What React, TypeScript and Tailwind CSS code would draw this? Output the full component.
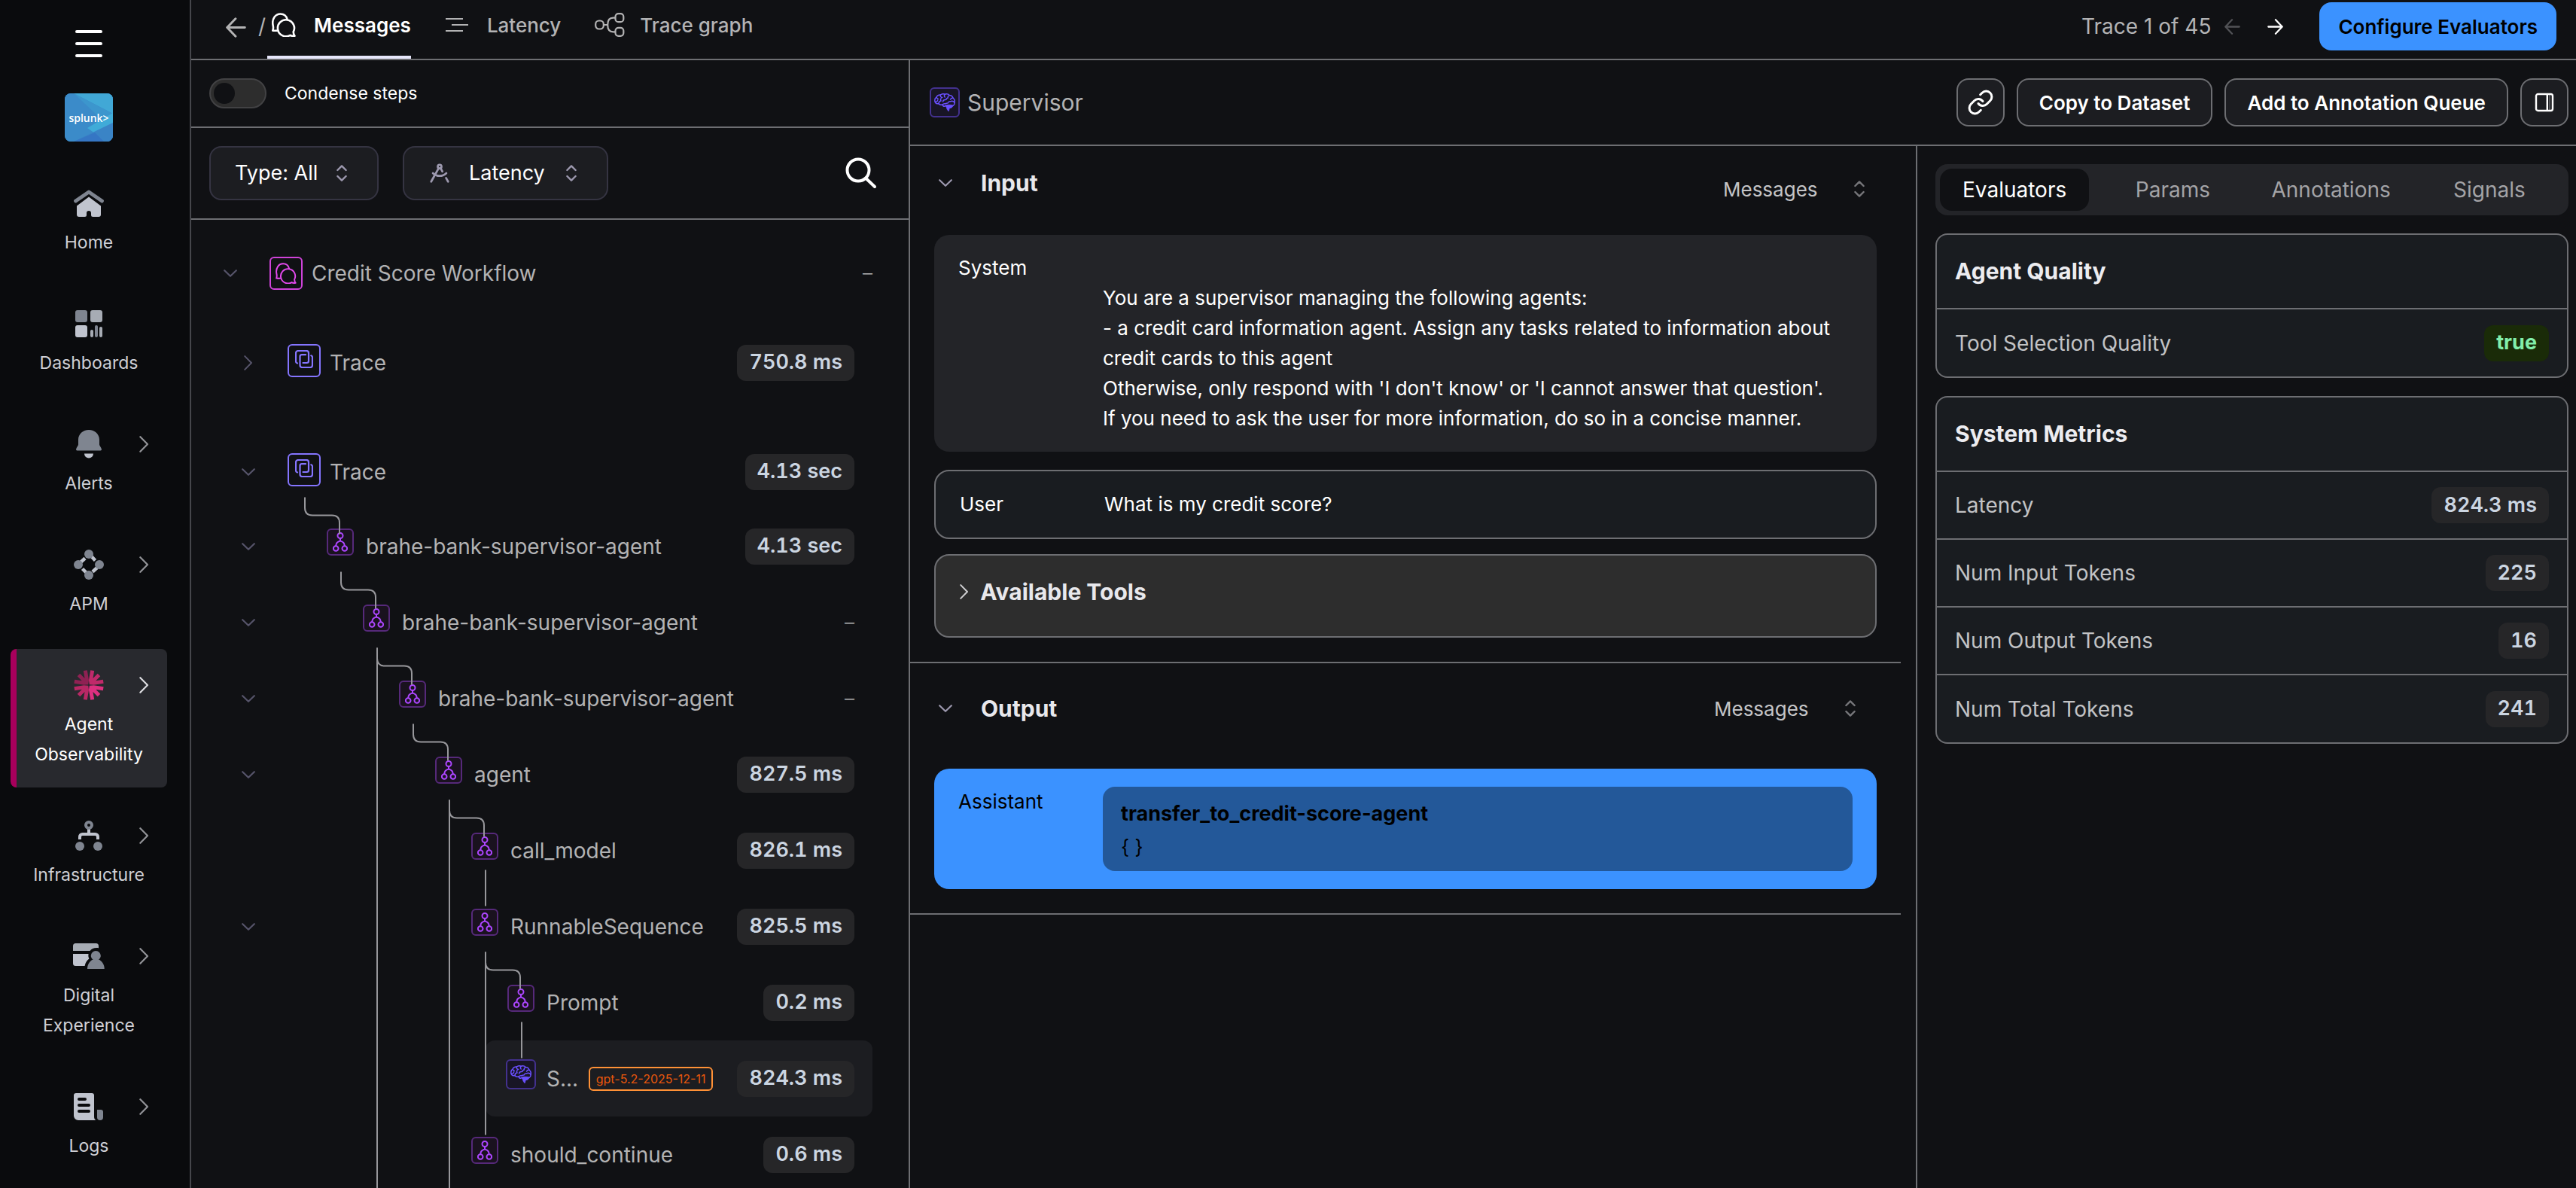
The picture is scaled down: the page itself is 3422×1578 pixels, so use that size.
import { useState } from 'react';
import type { ReactNode } from 'react';
import clsx from 'clsx';
import { DraftingCompass, Link } from 'lucide-react';

type SpanKind = 'trace' | 'agent' | 'llm';

interface SpanRow {
  name: string;
  level: number;
  kind: SpanKind;
  duration?: string;
  model?: string;
  expandable?: boolean;
}

const SPANS: SpanRow[] = [
  { name: 'brahe-bank-supervisor-agent', level: 1, kind: 'agent', duration: '4.13 sec', expandable: true },
  { name: 'brahe-bank-supervisor-agent', level: 2, kind: 'agent', expandable: true },
  { name: 'brahe-bank-supervisor-agent', level: 3, kind: 'agent', expandable: true },
  { name: 'agent', level: 4, kind: 'agent', duration: '827.5 ms', expandable: true },
  { name: 'call_model', level: 5, kind: 'agent', duration: '826.1 ms' },
  { name: 'RunnableSequence', level: 5, kind: 'agent', duration: '825.5 ms', expandable: true },
  { name: 'Prompt', level: 6, kind: 'agent', duration: '0.2 ms' },
  { name: 'S...', level: 6, kind: 'llm', duration: '824.3 ms', model: 'gpt-5.2-2025-12-11' },
  { name: 'should_continue', level: 5, kind: 'agent', duration: '0.6 ms' },
];

const SELECTED_SPAN = 7;
const ROW_HEIGHT = 101;
const TRACE_HEIGHT = 97;
const INDENT = 48;

const SYSTEM_PROMPT = `
You are a supervisor managing the following agents:
- a credit card information agent. Assign any tasks related to information about credit cards to this agent
Otherwise, only respond with 'I don't know' or 'I cannot answer that question'.
If you need to ask the user for more information, do so in a concise manner.`;

const METRICS = [
  { label: 'Latency', value: '824.3 ms' },
  { label: 'Num Input Tokens', value: '225' },
  { label: 'Num Output Tokens', value: '16' },
  { label: 'Num Total Tokens', value: '241' },
];

/* ---------- icons ---------- */

function ChevronDown({ className }: { className?: string }) {
  return (
    <svg className={className} width="18" height="10" viewBox="0 0 18 10" fill="none" stroke="currentColor" strokeWidth="2.2" strokeLinecap="round" strokeLinejoin="round">
      <path d="M1.2 1.2 9 8.8l7.8-7.6" />
    </svg>
  );
}

function ChevronRight({ className, size = 22 }: { className?: string; size?: number }) {
  return (
    <svg className={className} width={size * 0.56} height={size} viewBox="0 0 12 22" fill="none" stroke="currentColor" strokeWidth="2.2" strokeLinecap="round" strokeLinejoin="round">
      <path d="m1.2 1.2 9.6 9.8-9.6 9.8" />
    </svg>
  );
}

function SortIcon({ className }: { className?: string }) {
  return (
    <svg className={className} width="14" height="22" viewBox="0 0 14 22" fill="none" stroke="currentColor" strokeWidth="2.4" strokeLinecap="round" strokeLinejoin="round">
      <path d="m1.4 7 5.6-5.6L12.6 7M1.4 15 7 20.6l5.6-5.6" />
    </svg>
  );
}

function ArrowIcon({ className, flip, size = 24 }: { className?: string; flip?: boolean; size?: number }) {
  return (
    <svg className={className} width={size} height={size} viewBox="0 0 24 24" fill="none" stroke="currentColor" strokeWidth="2.6" strokeLinecap="round" strokeLinejoin="round">
      {flip ? <path d="M1.5 12h21M12.5 1.5 22.5 12l-10 10.500" /> : <path d="M22.5 12h-21M11.5 1.5 1.5 12l10 10.500" />}
    </svg>
  );
}

function ChatIcon({ size = 32, strokeWidth = 2.2 }: { size?: number; strokeWidth?: number }) {
  return (
    <svg width={size} height={size} viewBox="0 0 32 32" fill="none" stroke="currentColor" strokeWidth={strokeWidth} strokeLinecap="round" strokeLinejoin="round">
      <path d="M8 23.6C6 23.9 4 23.7 1.3 23.6c1-2.4.9-4.4.3-7.1C-.1 8 5 1.5 11.5 1.5c4.3 0 7.9 2.7 9.1 7" />
      <path d="M30.5 30.7c-2.6.3-4.4.1-6-.9A11 11 0 1 1 28.7 25.4c.1 1.9.7 3.9 1.8 5.3Z" />
    </svg>
  );
}

function TraceIcon() {
  return (
    <svg width="24" height="24" viewBox="0 0 24 24" fill="none" stroke="currentColor" strokeWidth="2.2" strokeLinecap="round">
      <path d="M3 17.5c-1.300-.4-2-1.400-2-2.500V4a3 3 0 0 1 3-3h11a3 3 0 0 1 3 3v10.500a2.500 2.500 0 0 1-2.500 2.500H10.500" />
      <path d="M14 6.2H9A2.5 2.5 0 0 0 6.5 8.7V20a3 3 0 0 0 3 3H20a3 3 0 0 0 3-3V9.500c0-1-.7-1.800-1.700-2.200" />
    </svg>
  );
}

function AgentIcon() {
  return (
    <svg width="20" height="26" viewBox="0 0 20 26" fill="none" stroke="currentColor" strokeWidth="2">
      <circle cx="10" cy="4.5" r="3.5" />
      <circle cx="4.2" cy="21.5" r="3.3" />
      <circle cx="15.8" cy="21.5" r="3.3" />
      <path d="M10 8v4M10 11.5c-3.800 1-5.800 3-5.800 6.700M10 11.5c3.800 1 5.800 3 5.800 6.700" />
    </svg>
  );
}

function BrainIcon() {
  return (
    <svg width="28" height="24" viewBox="0 0 28 24" fill="none" stroke="currentColor" strokeWidth="1.5" strokeLinecap="round" strokeLinejoin="round">
      <path d="M14 17.3c-1.700.1-2.600-1-2.900-2.300-1.800.6-3.900.2-5-1.200-2 .2-4.200-.4-4.900-2.300C.3 8.6 1.3 6.2 3.1 5.2 3.8 2.9 6.1 1.9 8.4 2 9.9.8 12.4.5 14.2 1.2c2.300-.7 4.700-.1 6 1.300 2.300.1 4.200 1.500 4.700 3.600 2 1.400 2.700 3.800 2.100 6 .2 1.800-.2 3.300-1.600 4" />
      <path d="M3.1 5.2c.3 1.300 1 2 2.200 2.200M1.3 11.1c1.700.4 3-.4 3.300-2M6.1 13.7c-.2-1.900.9-3.300 2.700-3.600M8.4 2.1c-.4 2 .6 3.300 2.300 3.500M9 9.9c-.7-1-.6-2.200.2-3.100M14.2 1.3c-1 1.300-1 2.700 0 3.700M14.6 8.6c-1.700 0-2.800.9-3 2.300M11.1 15c.7-1.100 2-1.500 3.600-1.300M20.2 2.6c-1.500.6-2.200 1.800-1.900 3.300M18.3 5.9c-1.500.3-2.500 1.300-2.500 2.700M24.9 6.1c-1.700-.1-2.800.6-3.300 2M27 12.1c-1.500-1.800-3.600-2.200-5.400-1.300M21.6 10.8c-1.600-.2-2.900.5-3.200 1.900M18.4 12.7c-1.300.2-2.500.5-3.700 1" />
      <path d="M14.5 16.2c2.700-1.200 7.200-1.300 10.700-.2-.5 2.300-2.500 3.700-5 3.700-.3 1.700-.6 2.900-1 4-1.700-1.300-2.500-3.300-2.900-5.300-.8-.5-1.400-1.300-1.800-2.200Z" fill="currentColor" strokeWidth="0.8" />
    </svg>
  );
}

function GraphIcon() {
  return (
    <svg width="40" height="32" viewBox="0 0 40 32" fill="none" stroke="currentColor" strokeWidth="2.2">
      <rect x="1.2" y="10.5" width="10.6" height="11" rx="4.5" />
      <rect x="27.5" y="1.2" width="10.8" height="11" rx="4" />
      <rect x="27.5" y="19.8" width="10.8" height="11" rx="4" />
      <path d="M11.8 16h5M27.5 6.7h-3c-5 0-7.300 3-7.300 9.300s2.300 9.300 7.300 9.300h3" />
    </svg>
  );
}

function BarsIcon() {
  return (
    <svg width="32" height="20" viewBox="0 0 32 20" fill="none" stroke="currentColor" strokeWidth="2.2">
      <path d="M1 2h23M9 10h22M1 18h23" />
    </svg>
  );
}

function SearchIcon() {
  return (
    <svg width="42" height="42" viewBox="0 0 42 42" fill="none" stroke="currentColor" strokeWidth="4" strokeLinecap="round">
      <circle cx="17" cy="17" r="14.5" />
      <path d="m27.5 28 11.500 11" />
    </svg>
  );
}

function PanelIcon() {
  return (
    <svg width="26" height="26" viewBox="0 0 26 26" fill="none" stroke="currentColor" strokeWidth="2.4">
      <rect x="2" y="2" width="22" height="22" rx="2.5" />
      <path d="M16.8 2v22" />
      <path d="M20 3v20" strokeWidth="1" opacity="0.5" />
    </svg>
  );
}

function HomeNavIcon() {
  return (
    <svg width="42" height="36" viewBox="0 0 42 36">
      <path d="M3.5 15 21 3l17.500 12" fill="none" stroke="#7f8590" strokeWidth="4.8" strokeLinecap="round" strokeLinejoin="round" />
      <path d="M21 9.5 37 21.5V33a3 3 0 0 1-3 3h-7.500a2.500 2.500 0 0 1-2.500-2.500V31a3 3 0 0 0-6 0v2.500a2.500 2.500 0 0 1-2.500 2.500H8a3 3 0 0 1-3-3V21.500Z" fill="#c0c4ce" />
    </svg>
  );
}

function DashboardsNavIcon() {
  return (
    <svg width="36" height="36" viewBox="0 0 36 36">
      <rect width="16" height="16" rx="3" fill="#7f8590" />
      <rect x="20" width="16" height="16" rx="3" fill="#a7acb4" />
      <rect y="20" width="16" height="16" rx="3" fill="#c0c4ce" />
      <rect x="20" y="26" width="4" height="10" rx="2" fill="#a7acb4" />
      <rect x="26" y="20" width="4" height="16" rx="2" fill="#7f8590" />
      <rect x="32" y="22" width="4" height="14" rx="2" fill="#a7acb4" />
    </svg>
  );
}

function AlertsNavIcon() {
  return (
    <svg width="34" height="38" viewBox="0 0 34 38">
      <path d="M17 0c8 0 14 5.8 14 13v6.500c0 1.700 2.500 3.500 3 6.500 0 .9-.6 1.400-1.500 1.400h-31C.6 27.4 0 26.9 0 26c.5-3 3-4.800 3-6.500V13C3 5.8 9 0 17 0Z" fill="#7f8590" />
      <path d="M11 31.5h12a6 6 0 0 1-12 0Z" fill="#c0c4ce" />
    </svg>
  );
}

function ApmNavIcon() {
  return (
    <svg width="40" height="40" viewBox="0 0 40 40">
      <g stroke="#c0c4ce" strokeWidth="4.5">
        <path d="m23.5 9 5 5.500M9.5 16.5l5.500-5M11.5 25.5l5 5M25 29.5l6-5.500" />
      </g>
      <g fill="#7f8590">
        <circle cx="20" cy="6" r="6" />
        <circle cx="6" cy="20" r="6" />
        <circle cx="34" cy="20" r="6" />
        <circle cx="20" cy="34" r="6" />
      </g>
    </svg>
  );
}

function AgentNavIcon() {
  return (
    <svg width="40" height="40" viewBox="0 0 40 40" fill="none" strokeWidth="5">
      <path d="M15.3.6 17.5 13.5 17 17l-3.500.3L.8 15.2M6.5 6.5 16.5 16.5" stroke="#8f2153" />
      <path d="M24.7.6 22.5 13.5 23 17l3.500.3 12.700-2.100M33.5 6.5 23.5 16.5" stroke="#c02a6a" />
      <path d="M15.3 39.4 17.5 26.5 17 23l-3.500-.3L.8 24.8M6.5 33.5l10-10" stroke="#b82865" />
      <path d="M24.7 39.4 22.5 26.5 23 23l3.500-.3 12.700 2.100M33.5 33.5l-10-10" stroke="#dd3080" />
    </svg>
  );
}

function InfraNavIcon() {
  return (
    <svg width="36" height="40" viewBox="0 0 36 40">
      <path d="M18 10v8M6 25v-3.500a3.500 3.500 0 0 1 3.500-3.500h17a3.500 3.500 0 0 1 3.500 3.500V25" fill="none" stroke="#c0c4ce" strokeWidth="4" />
      <circle cx="18" cy="6" r="4" fill="none" stroke="#7f8590" strokeWidth="4" />
      <circle cx="6" cy="34" r="6" fill="#7f8590" />
      <circle cx="30" cy="34" r="6" fill="#7f8590" />
    </svg>
  );
}

function DigitalNavIcon() {
  return (
    <svg width="42" height="34" viewBox="0 0 42 34">
      <path d="M0 10V3.5A3.5 3.5 0 0 1 3.5 0h27A3.5 3.5 0 0 1 34 3.5V6.300c-4.500-1-9 .3-11.500 3.700Z" fill="#a7acb4" />
      <path d="M0 14h20.600c-.5 2.500-.2 4.500.8 6.500-3 2-5 5.500-5.800 9.500H3.500A3.5 3.5 0 0 1 0 26.5Z" fill="#c0c4ce" />
      <circle cx="30.3" cy="16.5" r="6.5" fill="#7f8590" />
      <path d="M19 34c0-6 3.200-10.500 7.500-12.500h7.600c4.300 2 7.600 6.500 7.600 12.500Z" fill="#7f8590" />
    </svg>
  );
}

function LogsNavIcon() {
  return (
    <svg width="40" height="36" viewBox="0 0 40 36">
      <path d="M3 0h21a3 3 0 0 1 3 3v28c0 2.500.8 4.200 2.500 5H6a6 6 0 0 1-6-6V3a3 3 0 0 1 3-3Z" fill="#c0c4ce" />
      <path d="M7 8h8M7 16h13M7 24h13" stroke="#0a0b0d" strokeWidth="4" strokeLinecap="round" />
      <path d="M31 22h5a3 3 0 0 1 3 3v7a4 4 0 0 1-8 0Z" fill="#7f8590" />
    </svg>
  );
}

/* ---------- sidebar ---------- */

interface NavItem {
  lines: string[];
  icon: ReactNode;
  submenu?: boolean;
  active?: boolean;
}

const NAV: NavItem[] = [
  { lines: ['Home'], icon: <HomeNavIcon /> },
  { lines: ['Dashboards'], icon: <DashboardsNavIcon /> },
  { lines: ['Alerts'], icon: <AlertsNavIcon />, submenu: true },
  { lines: ['APM'], icon: <ApmNavIcon />, submenu: true },
  { lines: ['Agent', 'Observability'], icon: <AgentNavIcon />, submenu: true, active: true },
  { lines: ['Infrastructure'], icon: <InfraNavIcon />, submenu: true },
  { lines: ['Digital', 'Experience'], icon: <DigitalNavIcon />, submenu: true },
  { lines: ['Logs'], icon: <LogsNavIcon />, submenu: true },
];

function Sidebar() {
  return (
    <aside className="flex w-[254px] shrink-0 flex-col items-center border-r-2 border-[#45464b] bg-[#0a0b0d] pr-4">
      <button aria-label="Toggle navigation" className="mt-10 flex flex-col gap-3">
        <span className="h-1 w-9 rounded-full bg-white" />
        <span className="h-1 w-9 rounded-full bg-white" />
        <span className="h-1 w-9 rounded-full bg-white" />
      </button>

      <a href="#" className="relative mt-12 flex size-16 items-center justify-center overflow-hidden rounded-lg bg-[#3a8cc8]">
        <svg className="absolute inset-0" width="64" height="64" viewBox="0 0 64 64">
          <path d="M0 0h64v64H0Z" fill="#3b8bc9" />
          <path d="M12 0h52v27Z" fill="#41a8d6" />
          <path d="M12 0 64 27v12L44 30Z" fill="#3c96cd" />
          <path d="M64 26v14L40 53 30 46Z" fill="#42b3dc" opacity="0.8" />
          <path d="M64 39v25H12Z" fill="#3a84c6" />
          <path d="M40 52 12 64h40Z" fill="#3576c4" />
        </svg>
        <span className="relative font-['Open_Sans',sans-serif] text-[14px] font-semibold text-white">splunk&gt;</span>
      </a>

      <nav className="mt-[34px] flex w-[208px] flex-col gap-4">
        {NAV.map((item) => (
          <a
            key={item.lines.join(' ')}
            href="#"
            className={clsx(
              'grid grid-cols-[1fr_42px_1fr] justify-items-center rounded-lg pt-7 pb-6 text-[23px] leading-10',
              item.active
                ? 'bg-[linear-gradient(90deg,#a8005c_8px,#28292e_8px)] text-white'
                : 'text-[#cfd0d6]',
            )}
          >
            <span className="col-start-2 flex h-10 items-center">{item.icon}</span>
            {item.submenu && (
              <span className={clsx('flex h-10 items-center pl-[22px]', item.active ? 'text-[#dcdce0]' : 'text-[#929397]')}>
                <ChevronRight />
              </span>
            )}
            <span className="col-span-3 mt-3 text-center">
              {item.lines.map((line) => (
                <span key={line} className="block">{line}</span>
              ))}
            </span>
          </a>
        ))}
      </nav>
    </aside>
  );
}

/* ---------- trace tree ---------- */

function Pill({ children, tone = 'neutral' }: { children: ReactNode; tone?: 'neutral' | 'success' }) {
  return (
    <span
      className={clsx(
        'inline-flex h-12 shrink-0 items-center rounded-xl px-4 text-[27px] whitespace-nowrap tabular-nums',
        tone === 'success' ? 'bg-[#1a2b08] font-bold text-[#82efac]' : 'bg-[#262628] font-semibold text-[#cbd5e1]',
      )}
    >
      {children}
    </span>
  );
}

function SpanBadge({ kind }: { kind: SpanKind }) {
  if (kind === 'trace') {
    return (
      <span className="flex size-11 items-center justify-center rounded-md border-2 border-[#8575ff] pb-1 text-[#8575ff]">
        <TraceIcon />
      </span>
    );
  }
  if (kind === 'llm') {
    return (
      <span className="flex size-10 items-center justify-center rounded-md border-2 border-[#43318e] bg-[#181526] text-[#6a50ff]">
        <BrainIcon />
      </span>
    );
  }
  return (
    <span className="flex size-9 items-center justify-center rounded-md border-2 border-[#56297a] bg-[#1a121f] text-[#ad46ff]">
      <AgentIcon />
    </span>
  );
}

function TreeRow({ span, selected, open = true }: { span: SpanRow; selected?: boolean; open?: boolean }) {
  const isTrace = span.kind === 'trace';
  return (
    <div className={clsx('flex items-center', isTrace ? 'h-[97px]' : 'h-[101px]')}>
      <span className="ml-[62px] flex w-7 shrink-0 justify-center">
        {span.expandable && (
          <button aria-label={open ? 'Collapse' : 'Expand'} className="text-[#56546a]">
            {open ? <ChevronDown /> : <ChevronRight size={20} />}
          </button>
        )}
      </span>
      <div
        className={clsx('flex h-full min-w-0 flex-1 items-center rounded-xl pr-6 pl-[25px]', selected && 'bg-[#1c1d21]')}
        style={{ marginLeft: 13 + span.level * INDENT }}
      >
        <span className={clsx('mr-3 flex w-11 shrink-0 justify-center', isTrace ? 'mb-[6px]' : 'mb-3')}>
          <SpanBadge kind={span.kind} />
        </span>
        <span className="min-w-0 flex-1 truncate text-[28px] text-[#b3b3b4]">{span.name}</span>
        {span.model && (
          <span className="mr-8 ml-2 flex h-8 shrink-0 items-center rounded-md border-2 border-[#ff9136] px-2 text-[16px] text-[#e8570c]">
            {span.model}
          </span>
        )}
        {span.duration ? <Pill>{span.duration}</Pill> : <span className="text-[26px] font-light text-[#b3b3b4]">–</span>}
      </div>
    </div>
  );
}

// Lines that join the icons of the expanded trace
function Connectors() {
  const x = (level: number) => 151 + level * INDENT;
  const y = (index: number) => (index < 0 ? TRACE_HEIGHT / 2 : TRACE_HEIGHT + ROW_HEIGHT * (index + 0.5));
  const bottom = TRACE_HEIGHT + ROW_HEIGHT * SPANS.length;

  const elbow = (level: number, index: number) =>
    `M${x(level)} ${y(index) + 34}v14q0 10 10 10h26q10 0 10 10v15`;
  const sibling = (level: number, index: number) => `M${x(level)} ${y(index) + 26}v48`;

  return (
    <svg className="pointer-events-none absolute inset-0" width="100%" height="100%" fill="none" stroke="#97979b" strokeWidth="2">
      <path d={elbow(0, -1)} />
      <path d={elbow(1, 0)} />
      <path d={elbow(2, 1)} />
      <path d={elbow(3, 2)} />
      <path d={elbow(4, 3)} />
      <path d={elbow(5, 5)} />
      <path d={sibling(5, 4)} />
      <path d={sibling(6, 6)} />
      <path d={`M${x(2)} ${y(1) + 34}V${bottom}`} />
      <path d={`M${x(4)} ${y(3) + 34}V${bottom}`} />
      <path d={`M${x(5)} ${y(5) + 34}V${y(8) - 26}`} />
    </svg>
  );
}

function TracePanel() {
  const [condense, setCondense] = useState(false);

  return (
    <section className="flex min-w-0 flex-col overflow-hidden border-r-2 border-[#6d6e72]">
      <label className="flex h-[90px] shrink-0 items-center gap-6 border-b-2 border-[#6d6e72] pl-6 text-[23px] text-white">
        <input
          type="checkbox"
          role="switch"
          checked={condense}
          onChange={(e) => setCondense(e.target.checked)}
          className="flex h-10 w-[76px] appearance-none items-center rounded-full border-2 border-[#424244] bg-[#2d2d2d] px-1 before:size-7 before:rounded-full before:bg-[#101114] before:content-[''] checked:justify-end"
        />
        Condense steps
      </label>

      <div className="flex h-[122px] shrink-0 items-center gap-8 border-b-2 border-[#6d6e72] pr-[42px] pl-6 text-[27px] text-white">
        <div className="flex h-[72px] items-center gap-6 rounded-2xl border-2 border-[#353442] bg-[#1c1d21] pr-10 pl-8">
          <select aria-label="Type" className="appearance-none bg-transparent">
            <option>Type: All</option>
          </select>
          <SortIcon className="text-[#9c98ae]" />
        </div>
        <div className="flex h-[72px] items-center gap-6 rounded-2xl border-2 border-[#353442] bg-[#1c1d21] pr-10 pl-8">
          <DraftingCompass className="text-[#9c98ae]" size={30} strokeWidth={2.2} />
          <select aria-label="Metric" className="mr-1 appearance-none bg-transparent">
            <option>Latency</option>
          </select>
          <SortIcon className="text-[#9c98ae]" />
        </div>
        <button aria-label="Search" className="ml-auto">
          <SearchIcon />
        </button>
      </div>

      <div className="pt-6 pr-12">
        <div className="mb-6 flex h-[93px] items-center">
          <button aria-label="Collapse" className="ml-[38px] flex w-7 justify-center text-[#56546a]">
            <ChevronDown />
          </button>
          <span className="mr-3 ml-[38px] flex size-11 items-center justify-center rounded-md border-2 border-[#cf43d9] text-[#e64af0]">
            <ChatIcon size={28} />
          </span>
          <span className="flex-1 text-[28px] text-[#b3b3b4]">Credit Score Workflow</span>
          <span className="text-[26px] font-light text-[#b3b3b4]">–</span>
        </div>

        <div className="mb-12">
          <TreeRow span={{ name: 'Trace', level: 0, kind: 'trace', duration: '750.8 ms', expandable: true }} open={false} />
        </div>

        <div className="relative">
          <TreeRow span={{ name: 'Trace', level: 0, kind: 'trace', duration: '4.13 sec', expandable: true }} />
          {SPANS.map((span, i) => (
            <TreeRow key={i} span={span} selected={i === SELECTED_SPAN} />
          ))}
          <Connectors />
        </div>
      </div>
    </section>
  );
}

/* ---------- message detail ---------- */

function IOSection({ title, roomy, children }: { title: string; roomy?: boolean; children: ReactNode }) {
  return (
    <section className="border-b-2 border-[#6d6e72] pr-8 pb-8 pl-8">
      <div className={clsx('flex items-center pb-5', roomy ? 'h-[140px] pr-7' : 'h-[118px] pr-4')}>
        <button aria-label={`Collapse ${title}`} className="flex w-[30px] justify-center text-[#9c98ae]">
          <ChevronDown />
        </button>
        <h2 className="ml-8 flex-1 text-[30px] font-bold text-[#e8e8ec]">{title}</h2>
        <div className={clsx('flex items-center gap-12', !roomy && 'pt-4')}>
          <select aria-label={`${title} format`} className="appearance-none bg-transparent text-[26px] text-[#c4c4c6]">
            <option>Messages</option>
          </select>
          <SortIcon className="text-[#77777b]" />
        </div>
      </div>
      {children}
    </section>
  );
}

function DetailPanel() {
  return (
    <div className="min-w-0 border-r-2 border-[#6d6e72] pr-5">
      <IOSection title="Input">
        <div className="flex rounded-[20px] bg-[#232428] px-8 py-6 text-[26px] leading-10 text-white">
          <span className="w-48 shrink-0">System</span>
          <p className="whitespace-pre-line">{SYSTEM_PROMPT}</p>
        </div>
        <div className="mt-6 flex rounded-[20px] border-2 border-[#6d6e72] bg-[#191c20] px-8 py-6 text-[26px] leading-10 text-white">
          <span className="w-48 shrink-0">User</span>
          <p>What is my credit score?</p>
        </div>
        <div className="mt-5 rounded-[20px] border-2 border-[#6d6e72] bg-[#2d2d2d] px-8 pt-7 pb-[39px]">
          <button className="flex items-center gap-4 text-[30px] leading-10 font-bold text-[#e8e8ec]">
            <ChevronRight size={20} className="text-[#d0d0d2]" />
            Available Tools
          </button>
        </div>
      </IOSection>

      <IOSection title="Output" roomy>
        <div className="flex rounded-[20px] bg-[#3b92ff] px-8 py-6 text-[26px] leading-10 text-black">
          <span className="w-48 shrink-0">Assistant</span>
          <div className="flex-1 rounded-2xl bg-[#235899] px-6 pt-4 pb-3">
            <p className="text-[27px] font-bold">transfer_to_credit-score-agent</p>
            <p className="mt-1">{'{ }'}</p>
          </div>
        </div>
      </IOSection>
    </div>
  );
}

/* ---------- metrics ---------- */

function MetricCard({ title, children }: { title: string; children: ReactNode }) {
  return (
    <section className="mt-6 overflow-hidden rounded-2xl border-2 border-[#6d6e72] bg-[#191c20]">
      <h3 className="flex h-[97px] items-center px-6 text-[30px] font-bold text-[#ececf0]">{title}</h3>
      <table className="w-full text-[28px] text-[#c2c3c5]">
        <tbody>{children}</tbody>
      </table>
    </section>
  );
}

function MetricRow({ label, value }: { label: string; value: ReactNode }) {
  return (
    <tr className="h-[90px] border-t-2 border-[#6d6e72]">
      <th scope="row" className="pl-6 text-left font-normal">{label}</th>
      <td className="pr-6 text-right">
        <span className="flex justify-end">{value}</span>
      </td>
    </tr>
  );
}

function InspectorPanel() {
  const [tab, setTab] = useState('Evaluators');

  return (
    <aside className="min-w-0 pt-6 pr-[10px] pl-6">
      <div role="tablist" className="grid h-[68px] grid-cols-4 items-center justify-items-center rounded-2xl bg-[#232428]">
        {['Evaluators', 'Params', 'Annotations', 'Signals'].map((name) => (
          <button
            key={name}
            role="tab"
            aria-selected={tab === name}
            onClick={() => setTab(name)}
            className={clsx(
              'h-14 rounded-2xl px-[30px] text-[28px]',
              tab === name ? 'bg-[#101114] text-white' : 'text-[#a3a3a6]',
            )}
          >
            {name}
          </button>
        ))}
      </div>

      <MetricCard title="Agent Quality">
        <MetricRow label="Tool Selection Quality" value={<Pill tone="success">true</Pill>} />
      </MetricCard>

      <MetricCard title="System Metrics">
        {METRICS.map((m) => (
          <MetricRow key={m.label} label={m.label} value={<Pill>{m.value}</Pill>} />
        ))}
      </MetricCard>
    </aside>
  );
}

/* ---------- page ---------- */

function TopBar() {
  return (
    <header className="flex h-20 shrink-0 items-stretch border-b-2 border-[#6d6e72] pr-[26px] pl-[46px] text-[#b3b3b4]">
      <button aria-label="Back" className="flex items-center pb-[6px]">
        <ArrowIcon size={27} />
      </button>
      <span className="ml-4 flex items-center pb-2 text-[28px]">/</span>
      <nav className="ml-[2px] flex text-[26px] font-medium">
        <a href="#" className="flex items-center gap-6 border-b-4 border-[#e6e6fa] pb-2 pl-[6px] font-semibold text-white">
          <ChatIcon strokeWidth={2.6} />
          Messages
        </a>
        <a href="#" className="ml-[45px] flex items-center gap-6 border-b-4 border-transparent pb-2">
          <BarsIcon />
          Latency
        </a>
        <a href="#" className="ml-[45px] flex items-center gap-5 border-b-4 border-transparent pb-2">
          <GraphIcon />
          Trace graph
        </a>
      </nav>
      <div className="ml-auto flex items-center pb-2">
        <span className="text-[28px]">Trace 1 of 45</span>
        <button aria-label="Previous trace" className="ml-[18px] text-[#515256]" disabled>
          <ArrowIcon size={21} />
        </button>
        <button aria-label="Next trace" className="ml-9 text-white">
          <ArrowIcon size={21} flip />
        </button>
        <button className="ml-12 h-16 rounded-2xl bg-[#3b92ff] px-[25px] text-[26px] font-semibold text-black">
          Configure Evaluators
        </button>
      </div>
    </header>
  );
}

export default function App() {
  return (
    <div className="flex h-screen overflow-hidden bg-[#101114] font-['Inter',sans-serif]">
      <Sidebar />
      <main className="flex min-w-0 flex-1 flex-col">
        <TopBar />
        <div className="grid min-h-0 flex-1 grid-cols-[955fr_2213fr] grid-rows-[minmax(0,1fr)]">
          <TracePanel />

          <div className="flex min-w-0 flex-col">
            <div className="flex h-[114px] shrink-0 items-center gap-4 border-b-2 border-[#6d6e72] pr-[10px] pl-[26px] text-[26px] font-semibold text-white">
              <div className="flex flex-1 items-center gap-[10px]">
                <SpanBadge kind="llm" />
                <h1 className="text-[30px] font-normal text-[#b3b3b4]">Supervisor</h1>
              </div>
              <button aria-label="Copy link" className="flex size-16 items-center justify-center rounded-2xl border-2 border-[#6d6e72] bg-[#1c1d21]">
                <Link size={36} strokeWidth={2} />
              </button>
              <button className="h-16 rounded-2xl border-2 border-[#6d6e72] bg-[#1c1d21] px-7">Copy to Dataset</button>
              <button className="h-16 rounded-2xl border-2 border-[#6d6e72] bg-[#1c1d21] px-7">Add to Annotation Queue</button>
              <button aria-label="Toggle side panel" className="flex size-16 items-center justify-center rounded-2xl border-2 border-[#6d6e72] bg-[#1c1d21]">
                <PanelIcon />
              </button>
            </div>

            <div className="grid min-h-0 flex-1 grid-cols-[1338fr_875fr]">
              <DetailPanel />
              <InspectorPanel />
            </div>
          </div>
        </div>
      </main>
    </div>
  );
}
